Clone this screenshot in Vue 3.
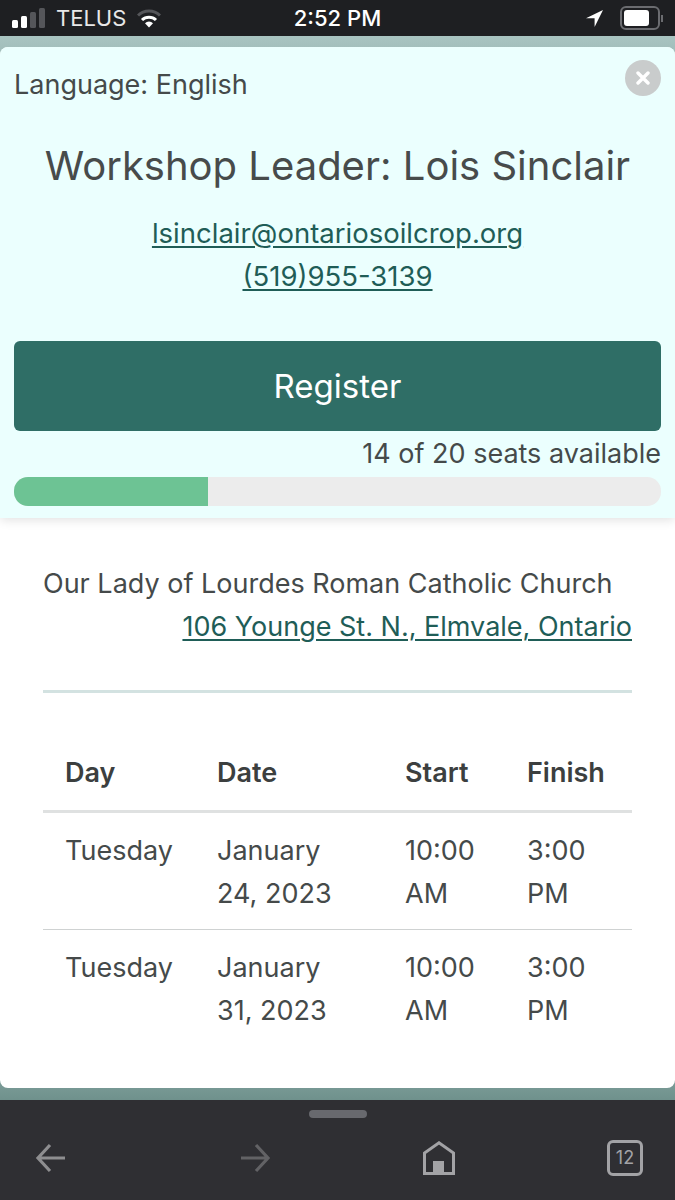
<script setup>
const rows = [
  { day: 'Tuesday', date: 'January 24, 2023', start: '10:00 AM', finish: '3:00 PM' },
  { day: 'Tuesday', date: 'January 31, 2023', start: '10:00 AM', finish: '3:00 PM' }
]
</script>

<template>
  <div class="phone">
    <div class="status">
      <div class="status-left">
        <svg width="38" height="20" viewBox="0 0 38 20">
          <rect x="0" y="12" width="6" height="8" rx="1.5" fill="#fff" />
          <rect x="9" y="8" width="6" height="12" rx="1.5" fill="#fff" />
          <rect x="18" y="4" width="6" height="16" rx="1.5" fill="#55565a" />
          <rect x="27" y="0" width="6" height="20" rx="1.5" fill="#55565a" />
        </svg>
        <span class="carrier">TELUS</span>
        <svg width="24" height="19" viewBox="0 0 24 19" class="wifi">
          <path d="M1 6.5a15.5 15.5 0 0 1 22 0" fill="none" stroke="#55565a" stroke-width="3" />
          <path d="M5 11a10 10 0 0 1 14 0" fill="none" stroke="#fff" stroke-width="3" />
          <path d="M12 18.5l-4-4.2a5.6 5.6 0 0 1 8 0z" fill="#fff" />
        </svg>
      </div>
      <span class="clock">2:52 PM</span>
      <div class="status-right">
        <svg width="17" height="17" viewBox="0 0 17 17"><path d="M17 0L0 8.2h8.6V17z" fill="#fff" /></svg>
        <div class="battery"><div class="battery-fill" /></div>
        <div class="battery-tip" />
      </div>
    </div>

    <div class="backdrop">
      <div class="sheet">
        <header class="panel">
          <div class="lang-row">
            <span>Language: English</span>
            <span class="close">
              <svg width="14" height="14" viewBox="0 0 14 14"><path d="M2 2l10 10M12 2L2 12" stroke="#fff" stroke-width="3.4" stroke-linecap="round" /></svg>
            </span>
          </div>
          <div class="leader">
            <h1>Workshop Leader: Lois Sinclair</h1>
            <a>lsinclair@ontariosoilcrop.org</a>
            <a>(519)955-3139</a>
          </div>
          <button class="register">Register</button>
          <div class="seats">14 of 20 seats available</div>
          <div class="bar"><div class="bar-fill" :style="{ width: '30%' }" /></div>
        </header>

        <section class="details">
          <div class="venue">Our Lady of Lourdes Roman Catholic Church</div>
          <div class="address"><a>106 Younge St. N., Elmvale, Ontario</a></div>
          <hr class="rule" />
          <table>
            <thead>
              <tr><th>Day</th><th>Date</th><th>Start</th><th>Finish</th></tr>
            </thead>
            <tbody>
              <tr v-for="(row, i) in rows" :key="i">
                <td>{{ row.day }}</td>
                <td>{{ row.date }}</td>
                <td>{{ row.start }}</td>
                <td>{{ row.finish }}</td>
              </tr>
            </tbody>
          </table>
        </section>
      </div>
    </div>

    <footer class="toolbar">
      <div class="handle" />
      <div class="tools">
        <svg width="32" height="30" viewBox="0 0 32 30"><path d="M15 2L3 15l12 13M3 15h27" fill="none" stroke="#8e8e90" stroke-width="3.2" /></svg>
        <svg width="32" height="30" viewBox="0 0 32 30"><path d="M17 2l12 13-12 13M29 15H2" fill="none" stroke="#626265" stroke-width="3.2" /></svg>
        <svg width="32" height="34" viewBox="0 0 32 34">
          <path d="M1.5 32.5V12L16 1.8 30.500 12v20.500z" fill="none" stroke="#a3a3a6" stroke-width="3" />
          <rect x="10" y="20" width="11" height="13" fill="#a3a3a6" />
        </svg>
        <div class="tabs">12</div>
      </div>
    </footer>
  </div>
</template>

<style scoped>
.phone {
  width: 675px;
  height: 1200px;
  display: flex;
  flex-direction: column;
  overflow: hidden;
  font-family: Inter, "Liberation Sans", sans-serif;
  color: #454a4a;
  background: #fff;
}

.status {
  height: 36px;
  flex: none;
  background: #1e1f22;
  color: #fff;
  display: grid;
  grid-template-columns: 1fr auto 1fr;
  align-items: center;
  padding: 0 12px;
}
.status-left {
  display: flex;
  align-items: center;
}
.carrier {
  margin-left: 6px;
  font-size: 22px;
  color: #e8e8e8;
}
.wifi {
  margin-left: 11px;
}
.clock {
  font-size: 22px;
  font-weight: 500;
}
.status-right {
  display: flex;
  align-items: center;
  justify-content: flex-end;
}
.battery {
  margin-left: 17px;
  width: 40px;
  height: 24px;
  box-sizing: border-box;
  border: 2px solid #6b6c70;
  border-radius: 6px;
  padding: 2px;
}
.battery-fill {
  width: 25px;
  height: 16px;
  background: #fff;
  border-radius: 3px;
}
.battery-tip {
  width: 2px;
  height: 7px;
  margin-left: 1px;
  background: #6b6c70;
}

.backdrop {
  height: 1064px;
  flex: none;
  box-sizing: border-box;
  padding: 11px 0 12px;
  background: linear-gradient(#a9c4c1 0, #a3bfbc 12px, #7f9f9b 1040px, #6f918c 100%);
}
.sheet {
  height: 1041px;
  background: #fff;
  border-radius: 8px;
  overflow: hidden;
}

.panel {
  height: 471px;
  box-sizing: border-box;
  padding: 0 14px;
  background: #ebfffe;
  box-shadow: 0 2px 10px rgba(0, 0, 0, 0.12);
  display: flex;
  flex-direction: column;
  position: relative;
}
.lang-row {
  height: 74px;
  display: flex;
  justify-content: space-between;
  align-items: center;
  font-size: 27px;
  padding-top: 0;
}
.close {
  width: 36px;
  height: 36px;
  border-radius: 50%;
  background: #c9cccc;
  display: flex;
  align-items: center;
  justify-content: center;
  margin-top: -12px;
}
.leader {
  margin-top: 10px;
  display: flex;
  flex-direction: column;
  align-items: center;
}
.leader h1 {
  margin: 0 0 11px;
  font-size: 40px;
  font-weight: 400;
  line-height: 70px;
  color: #474b4b;
}
.leader a {
  font-size: 27.5px;
  line-height: 43px;
}
a {
  color: #1f5d57;
  text-decoration: underline;
  text-underline-offset: 3px;
  text-decoration-thickness: 1.5px;
}
.register {
  margin-top: 43px;
  height: 90px;
  flex: none;
  border: 0;
  border-radius: 6px;
  background: #2f6e66;
  color: #fff;
  font: 400 33px Inter, "Liberation Sans", sans-serif;
}
.seats {
  margin-top: 4px;
  text-align: right;
  font-size: 27px;
  line-height: 38px;
}
.bar {
  margin-top: 4px;
  height: 29px;
  background: #ececec;
  border-radius: 14px;
  overflow: hidden;
}
.bar-fill {
  height: 100%;
  background: #6dc394;
}

.details {
  padding: 44px 43px 0;
  font-size: 27px;
}
.venue {
  line-height: 43px;
}
.address {
  text-align: right;
  line-height: 43px;
}
.rule {
  margin: 42px 0 0;
  border: 0;
  height: 3px;
  background: #d3e2e1;
}
table {
  width: 100%;
  margin-top: 58px;
  border-collapse: collapse;
  table-layout: fixed;
}
th {
  text-align: left;
  font-weight: 600;
  padding: 0 22px 16px;
  line-height: 43px;
  color: #3c3f3f;
  border-bottom: 3px solid #dfe1e1;
}
td {
  vertical-align: top;
  padding: 16px 22px 14px;
  line-height: 43px;
  border-bottom: 1px solid #cfd2d2;
}
tr:last-child td {
  border-bottom: 0;
}
th:nth-child(1) { width: 108px; }
th:nth-child(2) { width: 144px; }
th:nth-child(3) { width: 78px; }

.toolbar {
  flex: 1;
  background: #2f2f33;
  position: relative;
}
.handle {
  width: 58px;
  height: 8px;
  margin: 10px auto 0;
  border-radius: 4px;
  background: #68696e;
}
.tools {
  display: flex;
  justify-content: space-between;
  align-items: center;
  padding: 22px 32px 0 35px;
}
.tools svg:nth-child(2) { margin-left: 20px; }
.tabs {
  width: 36px;
  height: 36px;
  box-sizing: border-box;
  border: 3px solid #a3a3a6;
  border-radius: 6px;
  color: #a3a3a6;
  font-size: 18px;
  line-height: 30px;
  text-align: center;
}
</style>

<style>
body { margin: 0; }
</style>
